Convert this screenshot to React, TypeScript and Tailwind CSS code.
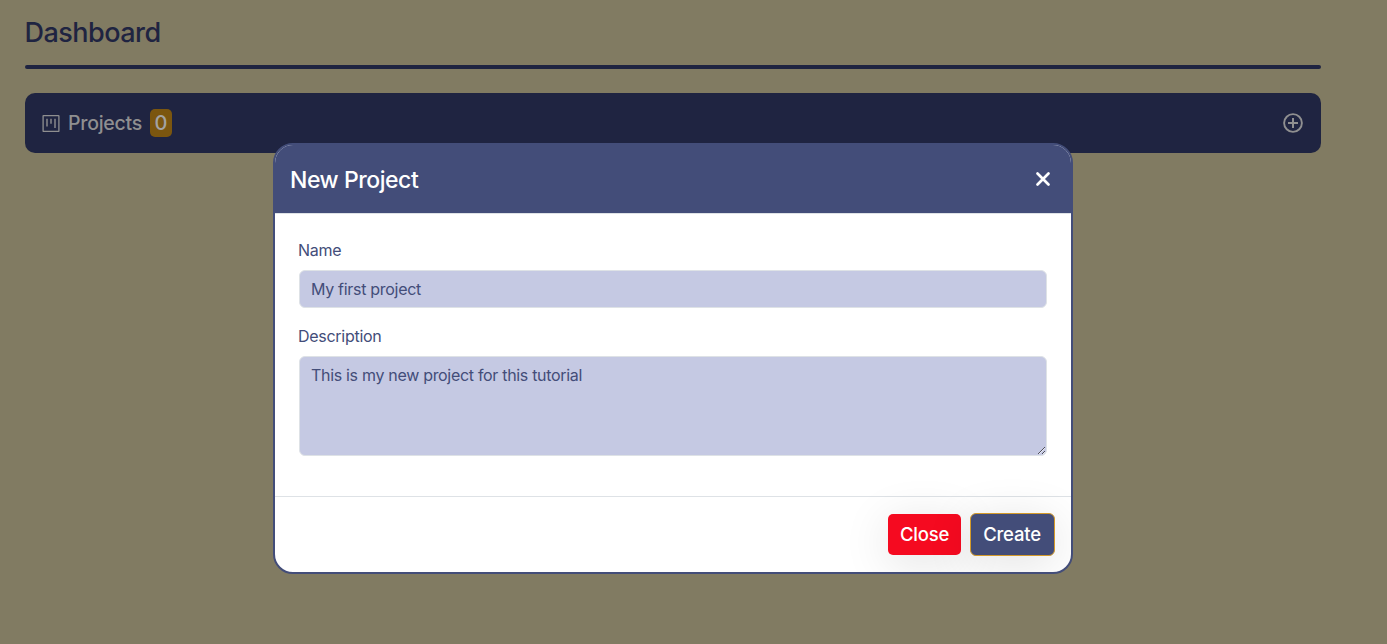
function ProjectIcon() {
  return (
    <svg width="18" height="18" viewBox="0 0 18 18" fill="none" stroke="currentColor">
      <rect x="1.1" y="1.6" width="15.8" height="15.8" rx="0.4" strokeWidth="1.3" />
      <path d="M5 4.8v7.8M9 4.8v5M13 4.8v9.2" strokeWidth="1.4" />
    </svg>
  );
}

function PlusCircleIcon() {
  return (
    <svg className="ml-auto" width="20" height="20" viewBox="0 0 20 20" fill="none" stroke="currentColor">
      <circle cx="10" cy="10" r="8.9" strokeWidth="1.9" />
      <path d="M10 5v10M5 10h10" strokeWidth="2" />
    </svg>
  );
}

function CloseIcon() {
  return (
    <svg width="16" height="16" viewBox="0 0 16 16" fill="none" stroke="currentColor" strokeWidth="2.7" strokeLinecap="round">
      <path d="M2.5 2.5 13.5 13.5M13.5 2.5 2.5 13.5" />
    </svg>
  );
}

export default function App() {
  return (
    <div className="relative h-[644px] overflow-hidden bg-[#817b62] font-['Inter',sans-serif]">
      <main className="w-[1321px] pl-[25px] pt-4">
        <h1 className="-ml-px w-fit pl-[0.5px] text-[27px] font-medium leading-[34px] tracking-[-0.52px] text-[#1f2441]">Dashboard</h1>
        <div className="mt-[15px] h-1 rounded-full bg-[#1f2441]" />
        <section className="mt-6 flex h-[60px] items-center rounded-[10px] bg-[#1f2441] pl-[17px] pr-[18px] text-[#8f8f90]">
          <ProjectIcon />
          <h2 className="ml-2 w-[74px] text-[19.5px] font-medium leading-6 tracking-[-0.25px]">Projects</h2>
          <span className="ml-2 flex h-7 w-[22px] items-center justify-center rounded-[5px] bg-[#7b560f] text-[20px] font-medium leading-7 text-[#a3a3a3]">0</span>
          <PlusCircleIcon />
        </section>
      </main>

      <div className="absolute inset-0 flex items-start pl-[273px] pt-[143px]">
        <div role="dialog" className="flex h-[431px] w-[800px] flex-col overflow-hidden rounded-[20px] border-2 border-[#434d79] bg-white text-[#434d79]">
          <header className="flex h-[69px] shrink-0 items-center justify-between border-b border-[#dee2e6] bg-[#434d79] pl-[15px] pr-5 text-white">
            <h2 className="pt-0.5 text-[23px] font-medium leading-9 tracking-[-0.45px]">New Project</h2>
            <CloseIcon />
          </header>
          <div className="flex flex-1 flex-col px-6 pt-6">
            <label className="-ml-px text-[16px] leading-6 tracking-[-0.3px]">Name</label>
            <input readOnly value="My first project" className="mt-2 h-[38px] rounded-md border border-[#dee2e6] bg-[#c5c9e3] px-[11px] text-[16px] leading-6 tracking-[-0.3px] outline-none" />
            <label className="-ml-px mt-4 text-[16px] leading-6 tracking-[-0.28px]">Description</label>
            <textarea readOnly value="This is my new project for this tutorial" className="mt-2 h-[100px] resize-y rounded-md border border-[#dee2e6] bg-[#c5c9e3] px-[11px] py-1.5 text-[16px] leading-6 tracking-[-0.31px] outline-none" />
          </div>
          <footer className="flex h-[76px] shrink-0 items-center justify-end gap-[9px] border-t border-[#dee2e6] pr-4 text-[18.5px] font-medium tracking-[-0.2px] text-white">
            <button className="h-[41px] w-[73px] rounded-[5px] bg-[#f50a20] shadow-[0_8px_48px_rgba(0,0,0,0.12)]">Close</button>
            <button className="h-[43px] w-[85px] rounded-md border border-[#d49a2a] bg-[#434d79] pr-px shadow-[0_8px_48px_rgba(0,0,0,0.12)]">Create</button>
          </footer>
        </div>
      </div>
    </div>
  );
}
